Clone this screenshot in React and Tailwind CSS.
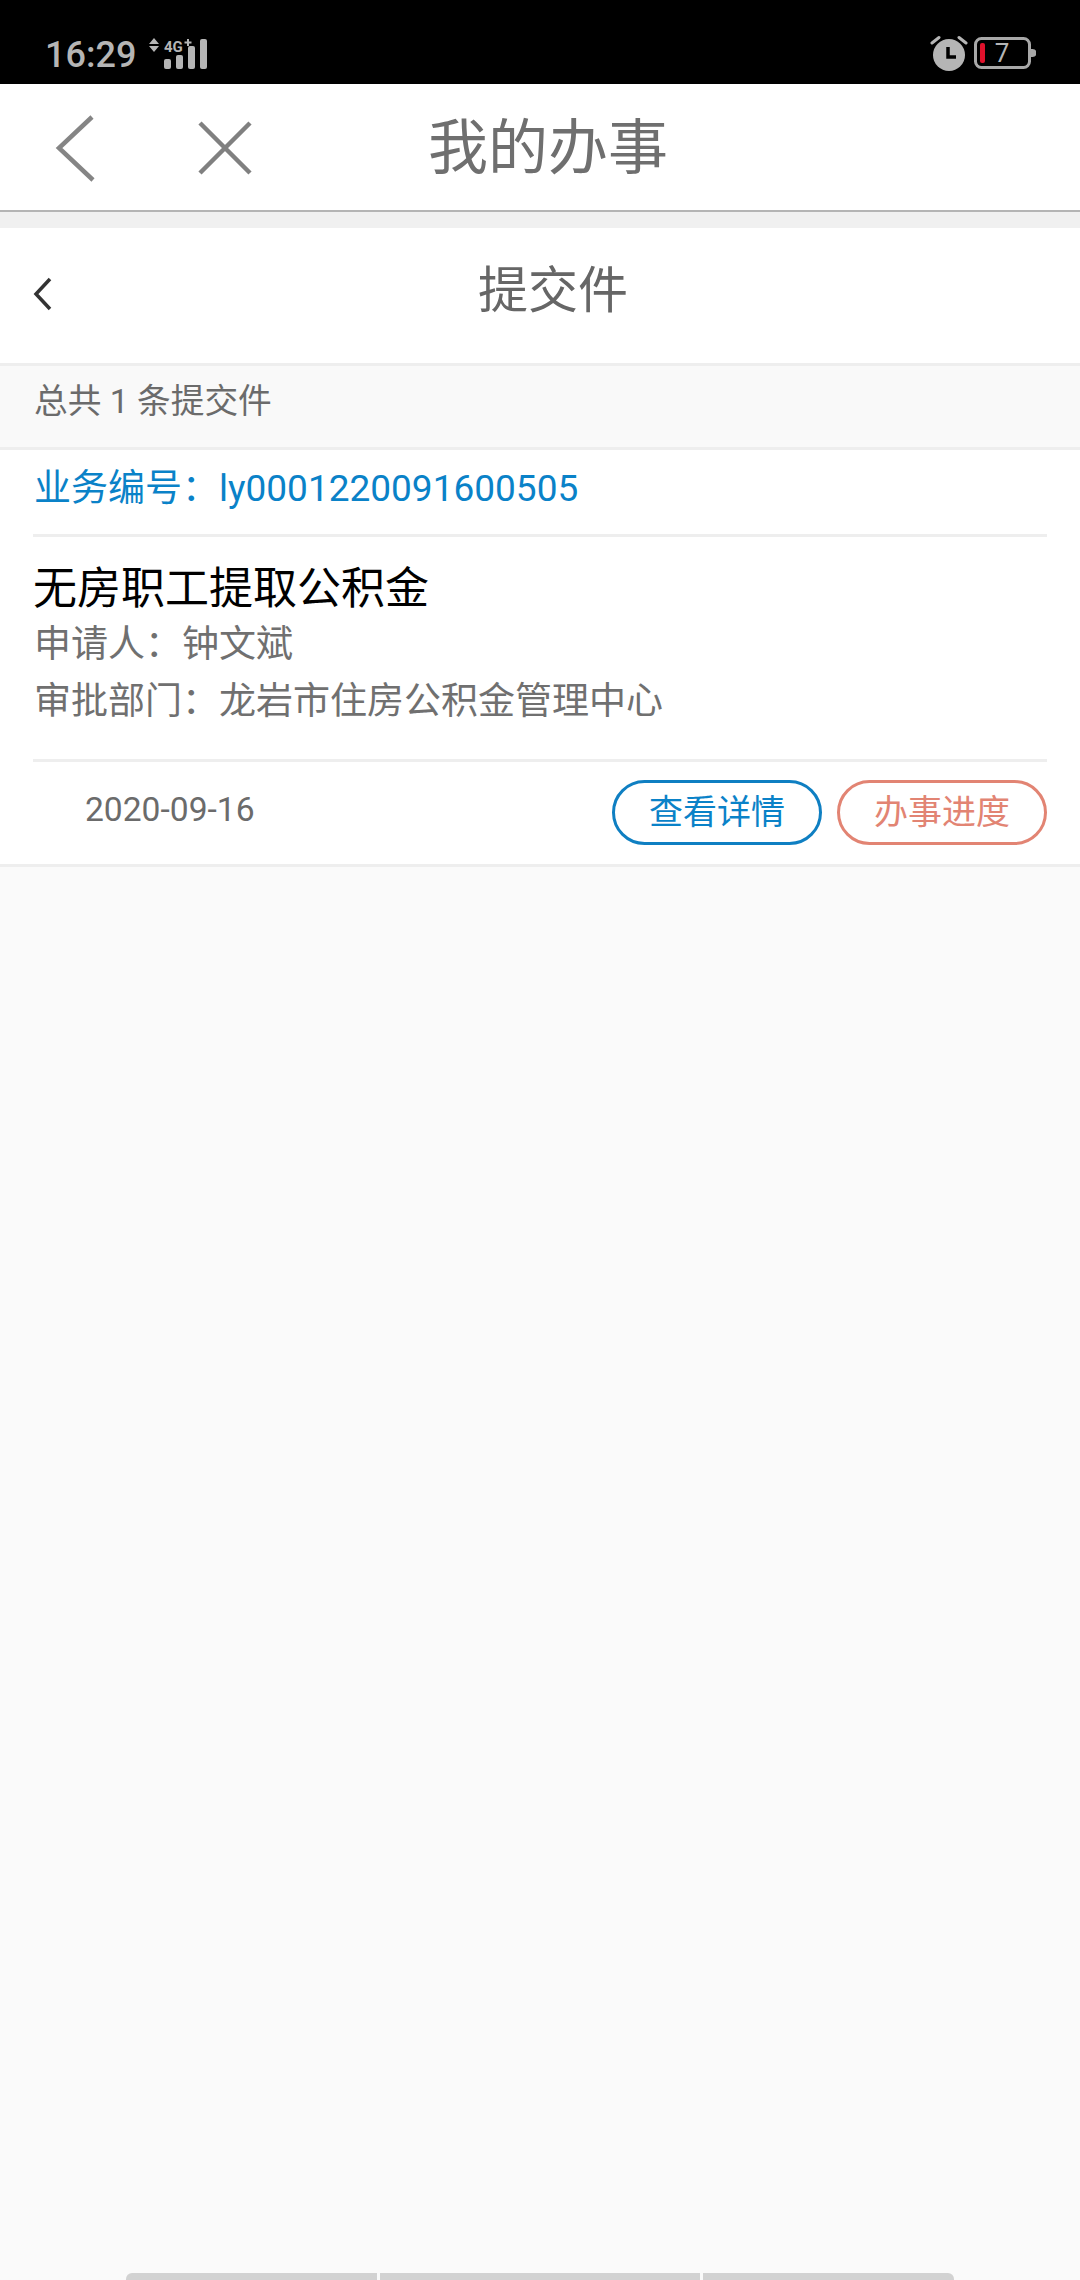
import React from "react";

const font = { fontFamily: '"Roboto", "Noto Sans CJK SC", sans-serif' };

const StatusLeft = () => (
  <div className="flex items-start">
    <span className="mt-[34px] ml-[45px] text-[36px] leading-[42px] font-medium text-[#b5b5b5] font-['Roboto']">16:29</span>
    <svg className="ml-[13px] mt-[38px]" width="62" height="32" viewBox="0 0 62 32" fill="#b5b5b5">
      <path d="M0 6 5 0 10 6ZM0 8 10 8 5 14Z" />
      <rect x="15" y="21" width="7" height="10" rx="2" />
      <rect x="27" y="17" width="7" height="14" rx="2" />
      <rect x="39" y="8" width="7" height="23" rx="2" />
      <rect x="51" y="1" width="7" height="30" rx="2" />
      <text x="15" y="14" fontSize="15" fontWeight="700" fontFamily="Roboto">4G</text>
      <path d="M38 1h2v2.500h2.500v2H40V8h-2V5.500h-2.500v-2H38Z" />
    </svg>
  </div>
);

const StatusRight = () => (
  <div className="flex items-start mt-[34px] mr-[44px] gap-[6px]">
    <svg width="38" height="38" viewBox="0 0 38 38">
      <circle cx="19" cy="21" r="16" fill="#b5b5b5" />
      <path d="M18 13v10h8" fill="none" stroke="#000" strokeWidth="3.500" />
      <path d="M2 9 9 3.500M36 9 29 3.500" fill="none" stroke="#b5b5b5" strokeWidth="3" strokeLinecap="round" />
    </svg>
    <svg width="62" height="36" viewBox="0 0 62 36" className="mt-[3px]">
      <rect x="1.500" y="1.500" width="54" height="29" rx="6" fill="none" stroke="#a8a8a8" strokeWidth="3" />
      <rect x="6" y="6" width="5" height="20" rx="2" fill="#e0112b" />
      <path d="M57 12h1.500a2.500 2.500 0 0 1 0 8H57Z" fill="#a8a8a8" />
      <text x="28" y="25" textAnchor="middle" fontSize="26" fill="#b5b5b5" fontFamily="Roboto">7</text>
    </svg>
  </div>
);

const TopNav = () => (
  <div className="relative h-[128px] bg-white border-b-2 border-[#b4b4b4] flex items-center">
    <svg className="ml-[54px] mt-[2px]" width="42" height="68" viewBox="0 0 42 68">
      <path d="M38 3 5 34 39 66" fill="none" stroke="#858585" strokeWidth="4.500" />
    </svg>
    <svg className="ml-[102px] mt-[2px]" width="54" height="54" viewBox="0 0 54 54">
      <path d="M2 2 52 52M52 2 2 52" fill="none" stroke="#808080" strokeWidth="4.500" />
    </svg>
    <span className="absolute left-[428px] top-[32px] text-[60px] leading-[66px] text-[#6f6f6f]">我的办事</span>
  </div>
);

const Header = () => (
  <div className="relative h-[135px] bg-white flex items-center">
    <svg className="ml-[33px] -mt-[4px]" width="20" height="34" viewBox="0 0 20 34">
      <path d="M17 2 3 17 17 32" fill="none" stroke="#333" strokeWidth="3.500" />
    </svg>
    <span className="absolute left-[478px] top-[34px] text-[50px] leading-[58px] text-[#666]">提交件</span>
  </div>
);

const Card = () => (
  <div className="bg-white border-y-[3px] border-[#eeeeee]">
    <div className="h-[84px] mx-[34px] flex items-center pb-[6px] text-[37px] text-[#0a82c8]">
      业务编号：ly0001220091600505
    </div>
    <div className="h-[228px] mx-[33px] border-y-[3px] border-[#eeeeee]">
      <div className="mt-[24px] text-[44px] leading-[56px] text-black">无房职工提取公积金</div>
      <div className="text-[37px] leading-[56px] pl-[1px] text-[#707070]">申请人：钟文斌</div>
      <div className="mt-[1px] text-[37px] leading-[56px] pl-[1px] text-[#707070]">审批部门：龙岩市住房公积金管理中心</div>
    </div>
    <div className="h-[102px] mx-[33px] flex items-start">
      <span className="ml-[52px] mt-[28px] text-[33.6px] leading-[40px] text-[#6b6b6b]">2020-09-16</span>
      <button className="ml-auto mt-[18px] w-[210px] h-[65px] rounded-[33px] border-[3px] border-[#0f7fc2] text-[34px] text-[#0a82c8] flex items-center justify-center">
        查看详情
      </button>
      <button className="ml-[15px] mt-[18px] w-[210px] h-[65px] rounded-[33px] border-[3px] border-[#e28473] text-[34px] text-[#e28473] flex items-center justify-center">
        办事进度
      </button>
    </div>
  </div>
);

export default function App() {
  return (
    <div className="relative w-[1080px] h-[2280px] overflow-hidden bg-[#fafafa] flex flex-col" style={font}>
      <div className="h-[84px] bg-black flex justify-between shrink-0">
        <StatusLeft />
        <StatusRight />
      </div>
      <TopNav />
      <div className="h-[16px] bg-[#f0f0f0]" />
      <Header />
      <div className="h-[84px] bg-[#f9f9f9] border-t-[3px] border-[#eeeeee] flex items-center pl-[34px] pb-[8px] text-[33.7px] text-[#6b6b6b]">
        总共 1 条提交件
      </div>
      <Card />
      <div className="mt-auto mx-[126px] flex gap-[3px]">
        <div className="w-[251px] h-[7px] bg-[#d2d2d2] rounded-tl-[6px]" />
        <div className="w-[320px] h-[7px] bg-[#d2d2d2]" />
        <div className="w-[251px] h-[7px] bg-[#d2d2d2] rounded-tr-[6px]" />
      </div>
    </div>
  );
}
